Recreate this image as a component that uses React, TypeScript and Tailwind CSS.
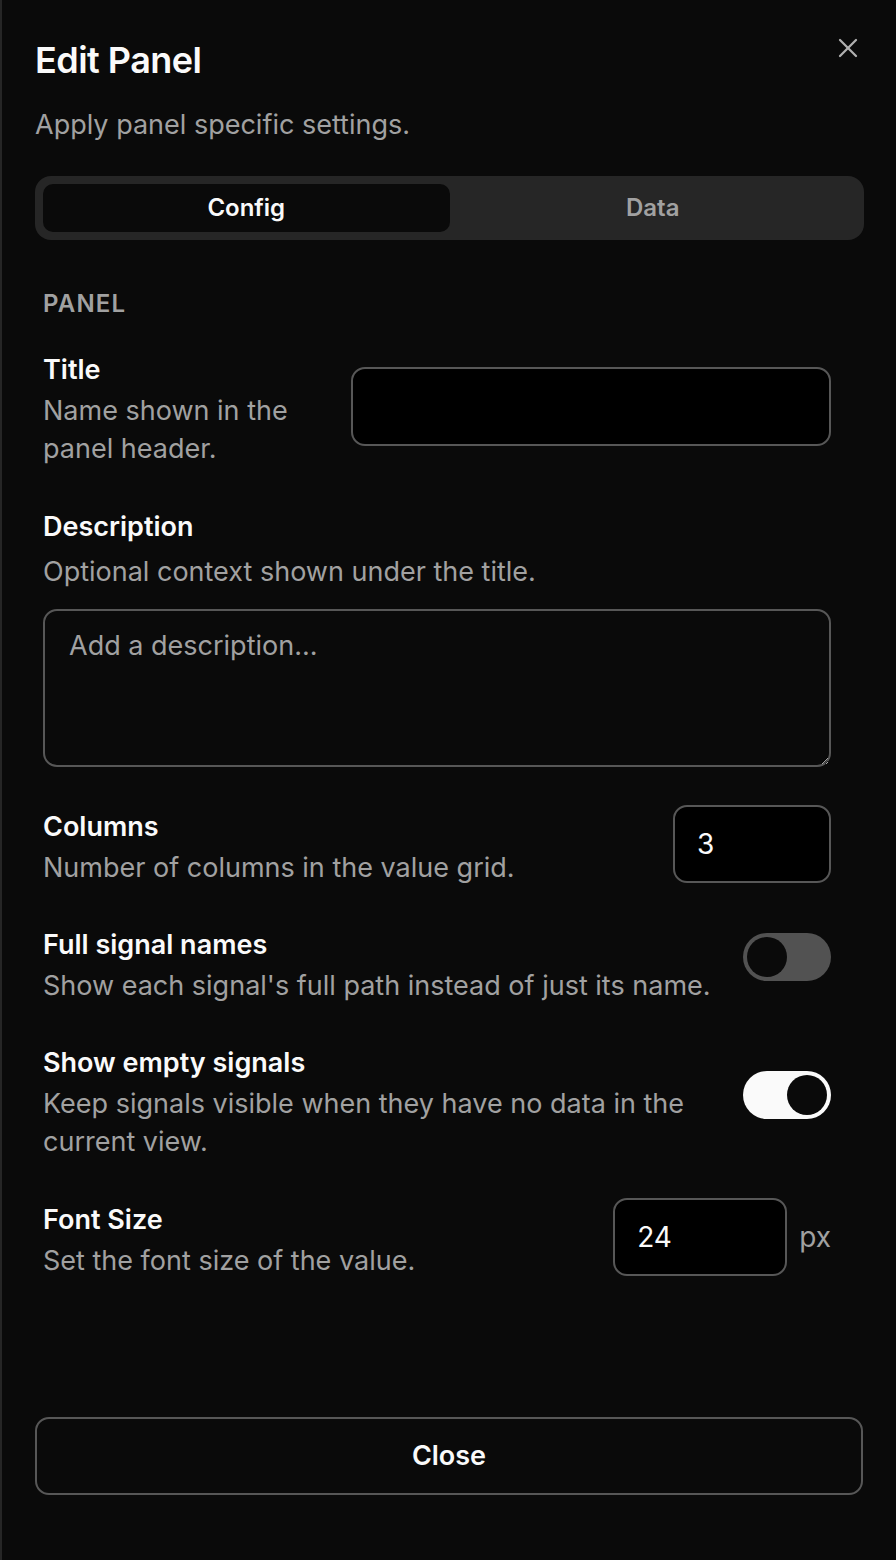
import { X } from "lucide-react";
import type { ReactNode } from "react";

function Toggle({ on }: { on: boolean }) {
  return (
    <div
      className={
        on
          ? "flex h-[48px] w-[88px] shrink-0 justify-end rounded-full bg-[#fafafa] p-[4px]"
          : "flex h-[48px] w-[88px] shrink-0 justify-start rounded-full bg-[#525252] p-[4px]"
      }
    >
      <div className="h-[40px] w-[40px] rounded-full bg-[#0a0a0a]" />
    </div>
  );
}

function FieldText({ label, desc }: { label: string; desc: ReactNode }) {
  return (
    <div className="min-w-0 flex-1">
      <div className="text-[27px] leading-[40px] font-semibold text-[#fafafa]">{label}</div>
      <div className="mt-[2px] text-[27px] leading-[38px] text-[#a1a1a1]">{desc}</div>
    </div>
  );
}

export default function App() {
  return (
    <div className="relative flex h-[1560px] w-[896px] flex-col border-l-2 border-[#262626] bg-[#0a0a0a] font-['Inter',sans-serif] text-[#fafafa]">
      {/* header */}
      <div className="pl-[33px] pr-[32px] pt-[40px]">
        <h2 className="text-[36px] leading-[40px] font-semibold tracking-[-0.015em]">Edit Panel</h2>
        <p className="mt-[25px] text-[27px] leading-[40px] text-[#a1a1a1]">Apply panel specific settings.</p>

        <div className="mt-[31px] grid h-[64px] grid-cols-2 rounded-[16px] bg-[#262626] p-[8px]">
          <div className="flex items-center justify-center rounded-[10px] bg-[#0a0a0a] text-[24px] font-semibold text-[#fafafa]">
            Config
          </div>
          <div className="flex items-center justify-center rounded-[10px] text-[24px] font-semibold text-[#a1a1a1]">
            Data
          </div>
        </div>
      </div>

      <button className="absolute right-[32px] top-[32px] flex h-[32px] w-[32px] items-center justify-center text-[#b0b0b0]">
        <X size={32} strokeWidth={1.7} />
      </button>

      {/* settings */}
      <div className="pl-[41px] pr-[65px]">
        <div className="mt-[48px] text-[24px] leading-[32px] font-semibold tracking-[0.05em] text-[#a1a1a1]">PANEL</div>

        <div className="mt-[30px] flex items-center gap-[24px]">
          <FieldText label="Title" desc="Name shown in the panel header." />
          <input
            className="-mt-[6px] h-[79px] w-[480px] shrink-0 rounded-[14px] border-2 border-[#575757] bg-black px-[22px] text-[28px] text-[#fafafa] outline-none"
            defaultValue=""
          />
        </div>

        <div className="mt-[39px]">
          <div className="text-[27px] leading-[40px] font-semibold">Description</div>
          <div className="mt-[6px] text-[27px] leading-[38px] text-[#a1a1a1]">Optional context shown under the title.</div>
          <textarea
            className="mt-[18px] block h-[158px] w-full resize-y rounded-[14px] border-2 border-[#575757] bg-transparent px-[24px] pt-[15px] text-[27px] leading-[40px] text-[#fafafa] outline-none placeholder:text-[#a1a1a1] [color-scheme:dark]"
            placeholder="Add a description..."
          />
        </div>

        <div className="mt-[40px] flex items-center gap-[24px]">
          <FieldText label="Columns" desc="Number of columns in the value grid." />
          <input
            className="-mt-[6px] h-[78px] w-[158px] shrink-0 rounded-[14px] border-2 border-[#575757] bg-black px-[22px] text-[28px] text-[#fafafa] outline-none"
            defaultValue="3"
          />
        </div>

        <div className="mt-[38px] flex items-center gap-[24px]">
          <FieldText label="Full signal names" desc="Show each signal's full path instead of just its name." />
          <div className="-mt-[16px]">
            <Toggle on={false} />
          </div>
        </div>

        <div className="mt-[38px] flex items-center gap-[24px]">
          <FieldText
            label="Show empty signals"
            desc="Keep signals visible when they have no data in the current view."
          />
          <div className="-mt-[14px]">
            <Toggle on={true} />
          </div>
        </div>

        <div className="mt-[39px] flex items-center gap-[24px]">
          <FieldText label="Font Size" desc="Set the font size of the value." />
          <div className="-mt-[6px] flex shrink-0 items-center gap-[12px]">
            <input
              className="h-[78px] w-[174px] rounded-[14px] border-2 border-[#575757] bg-black px-[22px] text-[28px] text-[#fafafa] outline-none"
              defaultValue="24"
            />
            <span className="text-[28px] text-[#a1a1a1]">px</span>
          </div>
        </div>
      </div>

      {/* footer */}
      <div className="mt-auto px-[33px] pb-[65px]">
        <button className="flex h-[78px] w-full items-center justify-center rounded-[14px] border-2 border-[#575757] bg-transparent text-[27px] font-semibold text-[#fafafa]">
          Close
        </button>
      </div>
    </div>
  );
}
